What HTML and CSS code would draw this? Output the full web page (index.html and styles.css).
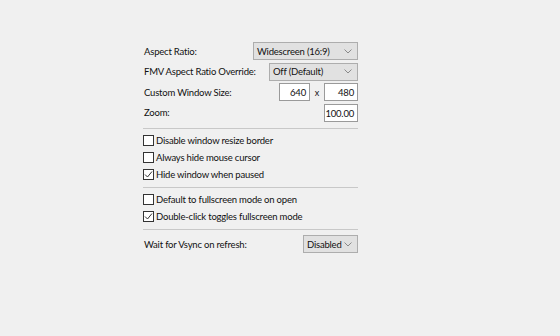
FILE: index.html
```html
<!DOCTYPE html>
<html lang="en">
<head>
    <meta charset="UTF-8">
    <meta name="viewport" content="width=device-width, initial-scale=1.0">
    <title>Display Settings</title>
    <link rel="stylesheet" href="styles.css">
</head>
<body>
    <div class="panel">
        <div class="row">
            <span class="label">Aspect Ratio:</span>
            <div class="combo combo-wide">
                <span>Widescreen (16:9)</span>
                <svg class="chev" width="8" height="5" viewBox="0 0 8 5"><path d="M0.5 0.5 L4 4 L7.5 0.5" fill="none" stroke="#8a8a8a" stroke-width="1"/></svg>
            </div>
        </div>
        <div class="row">
            <span class="label">FMV Aspect Ratio Override:</span>
            <div class="combo combo-mid">
                <span>Off (Default)</span>
                <svg class="chev" width="8" height="5" viewBox="0 0 8 5"><path d="M0.5 0.5 L4 4 L7.5 0.5" fill="none" stroke="#8a8a8a" stroke-width="1"/></svg>
            </div>
        </div>
        <div class="row">
            <span class="label">Custom Window Size:</span>
            <div class="size">
                <div class="edit edit-size">640</div>
                <span class="times">x</span>
                <div class="edit edit-num">480</div>
            </div>
        </div>
        <div class="row">
            <span class="label">Zoom:</span>
            <div class="edit edit-num">100.00</div>
        </div>

        <div class="sep"></div>

        <label class="check"><span class="box"></span>Disable window resize border</label>
        <label class="check"><span class="box"></span>Always hide mouse cursor</label>
        <label class="check"><span class="box"><svg width="9" height="9" viewBox="0 0 9 9"><path d="M1 4.5 L3.5 7 L8 1.5" fill="none" stroke="#333" stroke-width="1"/></svg></span>Hide window when paused</label>

        <div class="sep"></div>

        <label class="check"><span class="box"></span>Default to fullscreen mode on open</label>
        <label class="check"><span class="box"><svg width="9" height="9" viewBox="0 0 9 9"><path d="M1 4.5 L3.5 7 L8 1.5" fill="none" stroke="#333" stroke-width="1"/></svg></span>Double-click toggles fullscreen mode</label>

        <div class="sep"></div>

        <div class="row row-last">
            <span class="label">Wait for Vsync on refresh:</span>
            <div class="combo combo-small">
                <span>Disabled</span>
                <svg class="chev" width="8" height="5" viewBox="0 0 8 5"><path d="M0.5 0.5 L4 4 L7.5 0.5" fill="none" stroke="#8a8a8a" stroke-width="1"/></svg>
            </div>
        </div>
    </div>
</body>
</html>
```
FILE: styles.css
```css
body {
    margin: 0;
    background-color: #f0f0f0;
    font-family: Lato, "Noto Sans", sans-serif;
    font-size: 9.5px;
    letter-spacing: -0.2px;
    color: #111;
}
.panel {
    width: 215px;
    margin-left: 143px;
    padding-top: 42px;
    display: flex;
    flex-direction: column;
}
.row {
    display: flex;
    align-items: center;
    justify-content: space-between;
    height: 18px;
    margin-bottom: 2.5px;
    white-space: nowrap;
}
.row-last {
    margin-top: 2px;
}
.label {
    padding-left: 1px;
}
.combo {
    box-sizing: border-box;
    height: 18px;
    display: flex;
    align-items: center;
    justify-content: space-between;
    padding: 0 5px 0 3px;
    background-color: #e1e1e1;
    border: 1px solid #adadad;
    flex-shrink: 0;
}
.chev {
    flex-shrink: 0;
}
.combo-wide {
    width: 105px;
}
.combo-mid {
    width: 89px;
}
.combo-small {
    width: 55px;
}
.size {
    display: flex;
    align-items: center;
}
.times {
    width: 14px;
    text-align: center;
    font-size: 9px;
}
.edit {
    box-sizing: border-box;
    height: 18px;
    background-color: #fff;
    border: 1px solid #9a9a9a;
    text-align: right;
    padding: 2px 3px 0 0;
    line-height: 13px;
}
.edit-size {
    width: 31px;
}
.edit-num {
    width: 34px;
}
.sep {
    height: 1px;
    background-color: #c8c8c8;
    margin: 3.5px 0;
}
.check {
    display: flex;
    align-items: center;
    height: 17px;
    white-space: nowrap;
}
.box {
    box-sizing: border-box;
    width: 11px;
    height: 11px;
    border: 1px solid #333;
    background-color: #fff;
    margin-right: 2px;
    display: flex;
    align-items: center;
    justify-content: center;
}
```
